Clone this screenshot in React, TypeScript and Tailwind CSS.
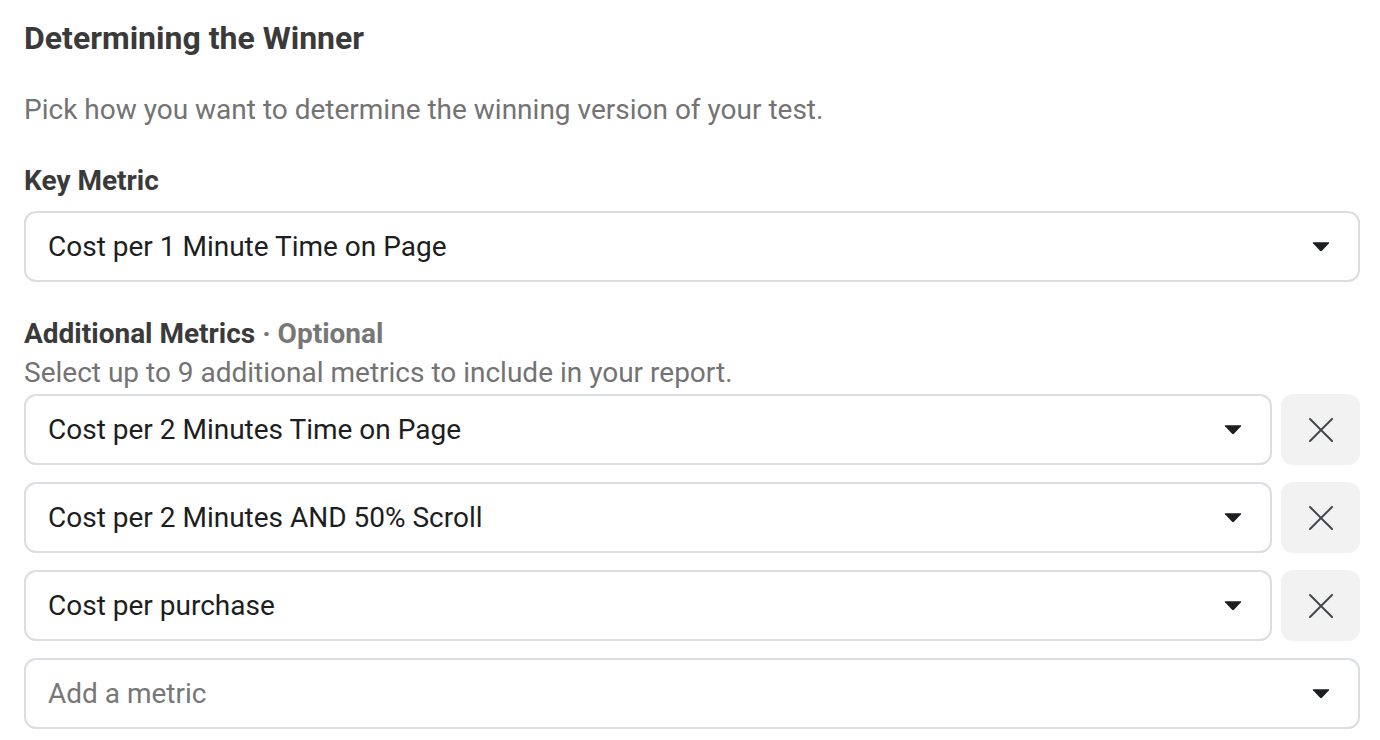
import React from "react";

function Caret() {
  return (
    <svg width="18" height="11" viewBox="0 0 18 11" className="shrink-0">
      <path d="M1.5 1.2 H16.5 Q17.8 1.2 17 2.3 L10.2 9.6 Q9 10.8 7.8 9.6 L1 2.3 Q0.2 1.2 1.5 1.2 Z" fill="#1c1e21" />
    </svg>
  );
}

function XIcon() {
  return (
    <svg width="24" height="24" viewBox="0 0 24 24">
      <path d="M1 1 L23 23 M23 1 L1 23" stroke="#444950" strokeWidth="2" strokeLinecap="round" />
    </svg>
  );
}

function Select({ text, placeholder }: { text: string; placeholder?: boolean }) {
  return (
    <div className="flex-1 h-[71px] rounded-[12px] border-2 border-[#dadde1] bg-white flex items-center justify-between pl-[22px] pr-[28px]">
      <span className={placeholder ? "text-[#777777]" : "text-[#1c1e21]"}>{text}</span>
      <Caret />
    </div>
  );
}

function Row({ text }: { text: string }) {
  return (
    <div className="flex gap-[9px]">
      <Select text={text} />
      <div className="w-[79px] h-[71px] rounded-[12px] bg-[#f2f2f2] flex items-center justify-center">
        <XIcon />
      </div>
    </div>
  );
}

export default function App() {
  return (
    <div
      className="w-[1380px] h-[740px] bg-white pl-[24px] pr-[20px] pt-[20px] text-[28px] leading-[32px]"
      style={{ fontFamily: "Roboto, 'Liberation Sans', sans-serif" }}
    >
      <h1 className="text-[32px] leading-[36px] font-bold text-[#3a3a3a]">Determining the Winner</h1>
      <p className="mt-[38px] text-[#737373]">Pick how you want to determine the winning version of your test.</p>
      <div className="mt-[39px] font-bold text-[#3a3a3a]">Key Metric</div>
      <div className="mt-[14px] flex">
        <Select text="Cost per 1 Minute Time on Page" />
      </div>
      <div className="mt-[36px] font-bold text-[#3a3a3a]">
        Additional Metrics <span className="text-[#777777]">· Optional</span>
      </div>
      <div className="mt-[7px] text-[#737373]">Select up to 9 additional metrics to include in your report.</div>
      <div className="mt-[5px] flex flex-col gap-[17px]">
        <Row text="Cost per 2 Minutes Time on Page" />
        <Row text="Cost per 2 Minutes AND 50% Scroll" />
        <Row text="Cost per purchase" />
        <div className="flex">
          <Select text="Add a metric" placeholder />
        </div>
      </div>
    </div>
  );
}
